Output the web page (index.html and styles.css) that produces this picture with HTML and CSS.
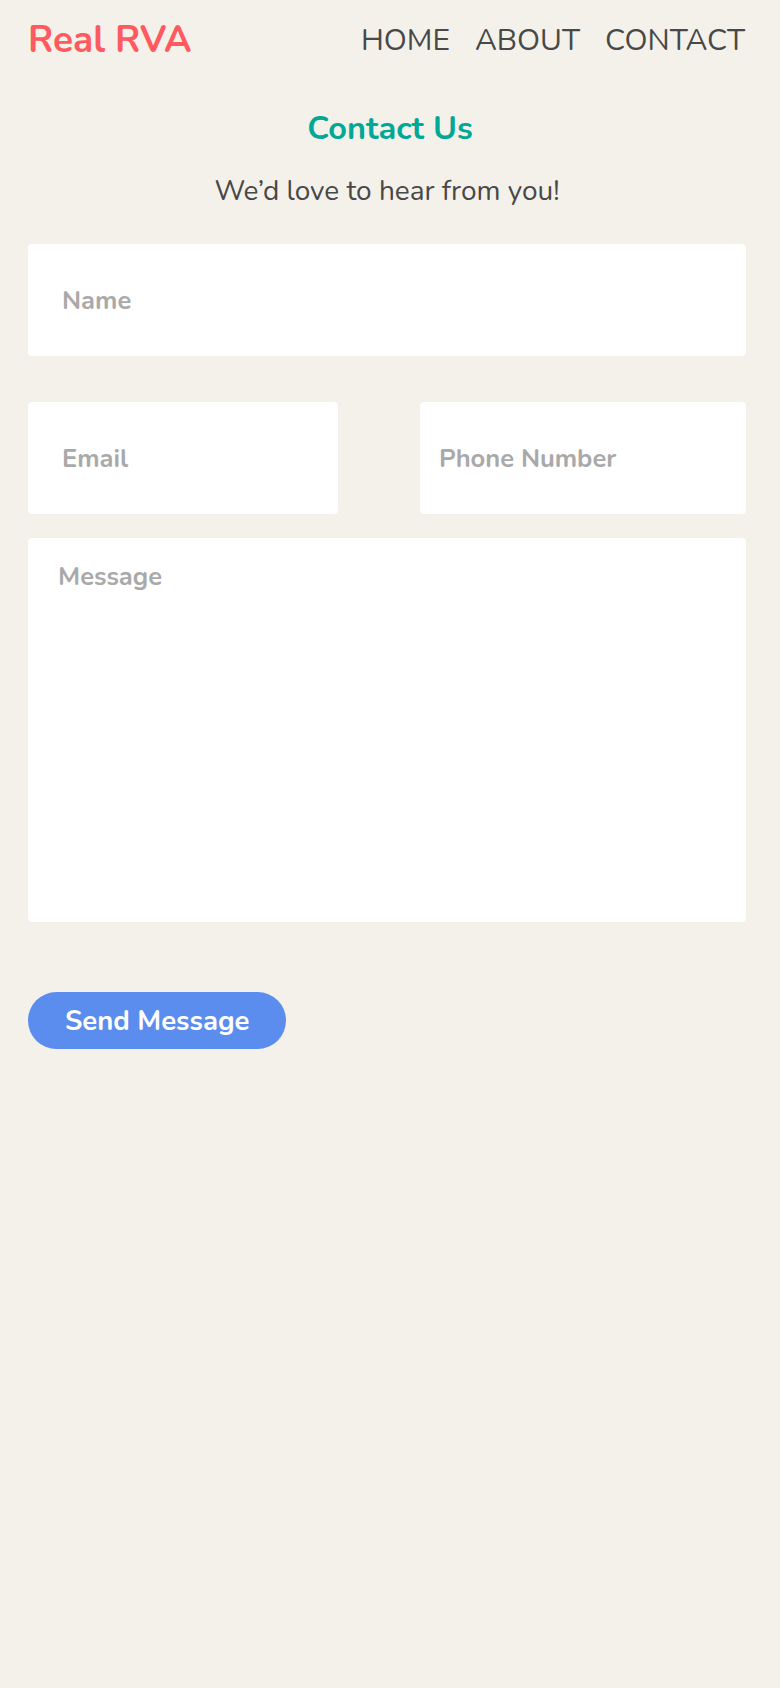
FILE: index.html
```html
<!DOCTYPE html>
<html lang="en">
<head>
<meta charset="utf-8">
<title>Real RVA - Contact</title>
<link rel="stylesheet" href="styles.css">
</head>
<body>
<div class="page">
  <header class="site-header">
    <a class="logo" href="#">Real RVA</a>
    <nav class="nav">
      <a href="#">HOME</a>
      <a href="#">ABOUT</a>
      <a href="#">CONTACT</a>
    </nav>
  </header>
  <main class="contact">
    <h1 class="title">Contact Us</h1>
    <p class="subtitle">We’d love to hear from you!</p>
    <form class="form">
      <input class="field field-name" type="text" placeholder="Name">
      <div class="row">
        <input class="field field-email" type="email" placeholder="Email">
        <input class="field field-phone" type="tel" placeholder="Phone Number">
      </div>
      <textarea class="field field-message" placeholder="Message"></textarea>
      <button class="send" type="button">Send Message</button>
    </form>
  </main>
</div>
</body>
</html>
```

FILE: styles.css
```css
html, body {
  margin: 0;
  padding: 0;
  background: #f4f1ea;
}
body {
  font-family: "Nunito", "Lato", "Open Sans", sans-serif;
  color: #484848;
}
.page {
  padding: 0 34px 0 28px;
}
.site-header {
  display: flex;
  justify-content: space-between;
  align-items: flex-start;
  padding-top: 22px;
}
.logo {
  font-size: 37px;
  line-height: 36px;
  font-weight: 700;
  color: #ff5a5f;
  text-decoration: none;
}
.nav {
  display: flex;
  gap: 25px;
  padding-top: 4px;
  padding-right: 1px;
}
.nav a {
  font-size: 30px;
  line-height: 30px;
  color: #484848;
  text-decoration: none;
}
.title {
  margin: 54px 0 0;
  padding-left: 6px;
  text-align: center;
  font-size: 32.5px;
  line-height: 32px;
  font-weight: 700;
  color: #00a896;
}
.subtitle {
  margin: 33px 0 0;
  text-align: center;
  font-size: 28px;
  line-height: 28px;
}
.form {
  margin-top: 39px;
  display: flex;
  flex-direction: column;
}
.field {
  box-sizing: border-box;
  border: none;
  border-radius: 4px;
  background: #fff;
  font-family: inherit;
  font-size: 25.5px;
  font-weight: 700;
  color: #484848;
  outline: none;
}
.field::placeholder {
  color: #a9a9a9;
  opacity: 1;
}
.field-name {
  height: 112px;
  padding: 0 0 0 34px;
}
.row {
  display: grid;
  grid-template-columns: 310px 1fr;
  gap: 82px;
  margin-top: 46px;
}
.field-email {
  height: 112px;
  width: 100%;
  padding: 0 0 0 34px;
}
.field-phone {
  height: 112px;
  width: 100%;
  padding: 0 0 0 19px;
}
.field-message {
  margin-top: 24px;
  height: 384px;
  padding: 24px 30px;
  resize: none;
  display: block;
  line-height: 1.2;
}
.send {
  align-self: flex-start;
  margin-top: 70px;
  height: 57px;
  padding: 0 37px;
  border: none;
  border-radius: 29px;
  background: #5b8def;
  color: #fff;
  font-family: inherit;
  font-size: 27.5px;
  font-weight: 700;
  cursor: pointer;
}
```
